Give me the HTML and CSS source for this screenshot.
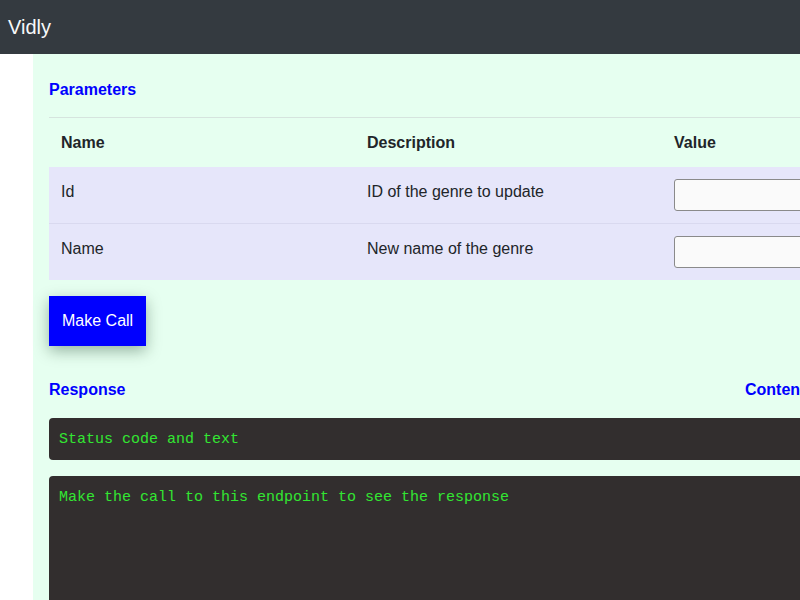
FILE: index.html
```html
<!DOCTYPE html>
<html>
<head>
<meta charset="utf-8">
<link rel="stylesheet" href="styles.css">
</head>
<body>
<nav class="navbar"><span class="brand">Vidly</span></nav>
<div class="layout">
  <aside class="side"></aside>
  <main class="panel">
    <h3 class="section-title">Parameters</h3>
    <table class="params">
      <thead>
        <tr><th class="col-name">Name</th><th class="col-desc">Description</th><th>Value</th></tr>
      </thead>
      <tbody>
        <tr><td>Id</td><td>ID of the genre to update</td><td><input class="field" type="text"></td></tr>
        <tr><td>Name</td><td>New name of the genre</td><td><input class="field" type="text"></td></tr>
      </tbody>
    </table>
    <button class="call-btn">Make Call</button>
    <div class="resp-head">
      <h3 class="section-title">Response</h3>
      <h3 class="section-title">Content-Type</h3>
    </div>
    <pre class="console status">Status code and text</pre>
    <pre class="console body">Make the call to this endpoint to see the response</pre>
  </main>
</div>
</body>
</html>
```
FILE: styles.css
```css
html { overflow: hidden; }
body {
  margin: 0;
  font-family: "Liberation Sans", Arial, sans-serif;
  font-size: 16px;
  color: #212529;
  background: #fff;
}
.navbar {
  height: 54px;
  background: #343a40;
  display: flex;
  align-items: center;
  padding: 0 8px;
}
.brand {
  color: #f8f9fa;
  font-size: 20px;
  line-height: 30px;
}
.layout {
  display: flex;
  width: 1000px;
}
.side {
  flex: 0 0 33px;
}
.panel {
  flex: 0 0 950px;
  background: #e6fff0;
  padding: 26px 16px 16px;
  min-height: 600px;
}
.section-title {
  margin: 0;
  color: #0000ff;
  font-size: 16px;
  font-weight: bold;
  line-height: 19px;
}
.params {
  width: 919px;
  margin-top: 18px;
  border-collapse: collapse;
  table-layout: fixed;
}
.col-name { width: 282px; }
.col-desc { width: 283px; }
.params th, .params td {
  text-align: left;
  vertical-align: top;
  padding: 13px 12px 11px;
  line-height: 24px;
}
.params th {
  padding-bottom: 12px;
  border-top: 1px solid #d6e4de;
}
.params tbody tr {
  background: #e6e6fa;
}
.params tbody td {
  border-top: 1px solid #d9d9ef;
}
.params tbody tr:first-child td {
  border-top: 1px solid #e6e6fa;
  padding-top: 12px;
  padding-bottom: 11px;
}
.field {
  display: block;
  box-sizing: border-box;
  width: 100%;
  height: 32px;
  margin: -1px 0 1px;
  border: 1px solid #8a8a8a;
  border-radius: 3px;
  background: #fafafa;
}
.call-btn {
  display: block;
  margin-top: 16px;
  padding: 13px 13px;
  background: #0000ff;
  color: #fff;
  border: none;
  font-family: "Liberation Sans", Arial, sans-serif;
  font-size: 16px;
  line-height: 24px;
  box-shadow: 0 5px 14px rgba(0, 40, 20, 0.35);
}
.resp-head {
  display: grid;
  grid-template-columns: 696px auto;
  margin-top: 34px;
}
.console {
  margin: 0;
  background: #322e2e;
  color: #32e632;
  font-family: "Liberation Mono", "Courier New", monospace;
  font-size: 15px;
  line-height: 22px;
  padding: 11px 10px 9px;
  border-radius: 4px;
}
.status {
  margin-top: 19px;
}
.body {
  margin-top: 16px;
  height: 200px;
}
```
